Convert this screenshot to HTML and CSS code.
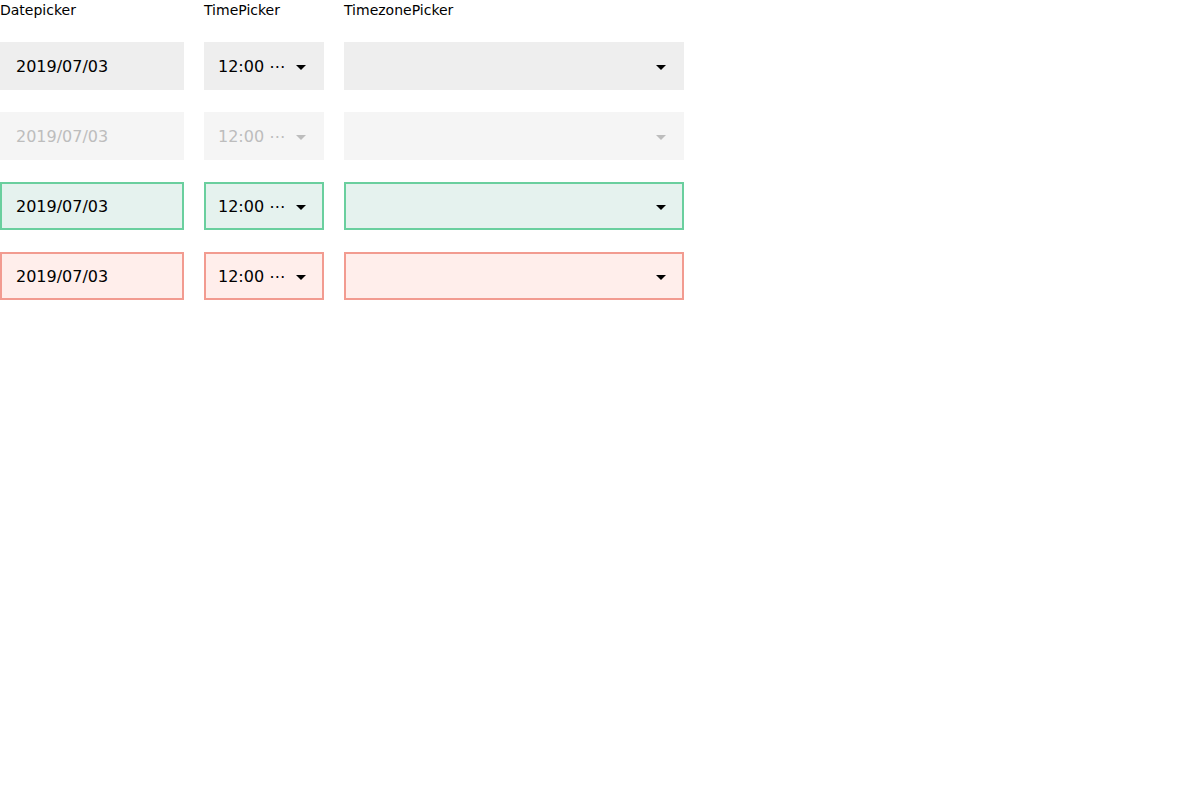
FILE: index.html
```html
<!DOCTYPE html>
<html>
<head>
<meta charset="utf-8">
<link rel="stylesheet" href="styles.css">
</head>
<body>
<div class="grid">
  <div class="label">Datepicker</div>
  <div class="label">TimePicker</div>
  <div class="label">TimezonePicker</div>

  <div class="field date"><span class="val">2019/07/03</span></div>
  <div class="field time"><span class="val">12:00 ⋯</span><span class="arrow"></span></div>
  <div class="field zone"><span class="val"></span><span class="arrow"></span></div>

  <div class="field date disabled"><span class="val">2019/07/03</span></div>
  <div class="field time disabled"><span class="val">12:00 ⋯</span><span class="arrow"></span></div>
  <div class="field zone disabled"><span class="val"></span><span class="arrow"></span></div>

  <div class="field date success"><span class="val">2019/07/03</span></div>
  <div class="field time success"><span class="val">12:00 ⋯</span><span class="arrow"></span></div>
  <div class="field zone success"><span class="val"></span><span class="arrow"></span></div>

  <div class="field date error"><span class="val">2019/07/03</span></div>
  <div class="field time error"><span class="val">12:00 ⋯</span><span class="arrow"></span></div>
  <div class="field zone error"><span class="val"></span><span class="arrow"></span></div>
</div>
</body>
</html>
```

FILE: styles.css
```css
html, body {
  margin: 0;
  padding: 0;
  background: #ffffff;
}
body {
  font-family: "DejaVu Sans", "Liberation Sans", sans-serif;
  color: #000000;
}
.grid {
  display: grid;
  grid-template-columns: 184px 120px 340px;
  column-gap: 20px;
  row-gap: 22px;
}
.label {
  font-size: 14px;
  line-height: 20px;
  height: 20px;
}
.field {
  box-sizing: border-box;
  height: 48px;
  background: #eeeeee;
  border: 2px solid transparent;
  display: flex;
  align-items: center;
  padding-left: 14px;
  padding-right: 14px;
  font-size: 16px;
}
.field.time {
  padding-left: 12px;
}
.val {
  flex: 1;
  white-space: nowrap;
  overflow: hidden;
}
.arrow {
  width: 0;
  height: 0;
  border-left: 5px solid transparent;
  border-right: 5px solid transparent;
  border-top: 5px solid #000000;
  margin-right: 2px;
  margin-top: 2px;
}
.disabled {
  background: #f5f5f5;
  color: #bdbdbd;
}
.disabled .arrow {
  border-top-color: #bdbdbd;
}
.success {
  background: #e5f2ee;
  border-color: #6acf9e;
}
.error {
  background: #ffeeeb;
  border-color: #f29b90;
}
```
